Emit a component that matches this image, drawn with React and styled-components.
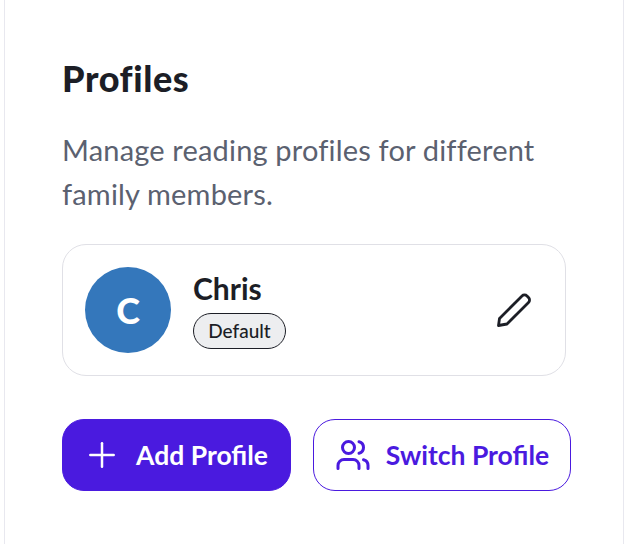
import React from 'react';
import styled, {createGlobalStyle} from 'styled-components';
import {Plus, Users} from 'lucide-react';

const GlobalStyle = createGlobalStyle`
  html, body {
    margin: 0;
    padding: 0;
    background: #fff;
  }
  body {
    font-family: "Lato", "Liberation Sans", sans-serif;
  }
`;

export default function App() {
  return (
    <>
      <GlobalStyle />
      <Page>
        <Panel>
          <Title>Profiles</Title>
          <Description>Manage reading profiles for different family members.</Description>
          <ProfileCard>
            <Avatar>C</Avatar>
            <ProfileInfo>
              <ProfileName>Chris</ProfileName>
              <DefaultBadge>Default</DefaultBadge>
            </ProfileInfo>
            <EditButton>
              <svg width="36" height="36" viewBox="0 0 36 36" fill="none" stroke="currentColor" strokeWidth="2.8" strokeLinejoin="round">
                <path d="M3.5 26.5 L26 4 a3.5 3.5 0 0 1 5 0 l1.5 1.5 a3.5 3.5 0 0 1 0 5 L11 32 L2.5 33.5 Z" />
              </svg>
            </EditButton>
          </ProfileCard>
          <ButtonRow>
            <ActionButton $primary $width={229} $gap={14}>
              <Plus size={40} strokeWidth={1.5} />
              Add Profile
            </ActionButton>
            <ActionButton $width={258} $gap={15}>
              <Users size={36} strokeWidth={2} />
              Switch Profile
            </ActionButton>
          </ButtonRow>
        </Panel>
      </Page>
    </>
  );
}

const Page = styled.div`
  width: 624px;
  height: 544px;
  padding-left: 4px;
  box-sizing: border-box;
  overflow: hidden;
`;

const Panel = styled.div`
  width: 620px;
  height: 544px;
  box-sizing: border-box;
  border-left: 1px solid #e8e8ef;
  border-right: 1px solid #e8e8ef;
  padding: 58px 57px 0;
`;

const Title = styled.h2`
  margin: 0;
  font-size: 36px;
  line-height: 40px;
  font-weight: 900;
  letter-spacing: 0.6px;
  color: #1c1e26;
`;

const Description = styled.p`
  margin: 30px 0 0;
  width: 490px;
  font-size: 29px;
  line-height: 44px;
  font-weight: 400;
  letter-spacing: 0.18px;
  color: #5b6170;
`;

const ProfileCard = styled.div`
  margin-top: 28px;
  width: 504px;
  height: 132px;
  box-sizing: border-box;
  border: 1px solid #e0e0e6;
  border-radius: 24px;
  padding: 0 33px 0 22px;
  display: flex;
  align-items: center;
`;

const Avatar = styled.div`
  width: 86px;
  height: 86px;
  border-radius: 50%;
  background: #3477bb;
  color: #fff;
  font-size: 36px;
  font-weight: 900;
  display: flex;
  align-items: center;
  justify-content: center;
  flex-shrink: 0;
`;

const ProfileInfo = styled.div`
  margin-left: 22px;
  padding-bottom: 1px;
  flex: 1;
  display: flex;
  flex-direction: column;
  align-items: flex-start;
`;

const ProfileName = styled.div`
  font-size: 30px;
  line-height: 34px;
  font-weight: 700;
  color: #1c1e26;
`;

const DefaultBadge = styled.span`
  margin-top: 8px;
  height: 36px;
  width: 93px;
  box-sizing: border-box;
  border: 1px solid #1c1e26;
  border-radius: 18px;
  background: #edeef0;
  color: #1c1e26;
  font-size: 19px;
  font-weight: 500;
  display: flex;
  align-items: center;
  justify-content: center;
`;

const EditButton = styled.div`
  width: 36px;
  height: 36px;
  color: #1c1e26;
  display: flex;
  align-items: center;
  justify-content: center;
`;

const ButtonRow = styled.div`
  margin-top: 43px;
  display: flex;
  gap: 22px;
`;

const ActionButton = styled.button`
  width: ${props => props.$width}px;
  height: 72px;
  flex-shrink: 0;
  box-sizing: border-box;
  border: 1px solid #4a1adf;
  border-radius: 22px;
  background: ${props => (props.$primary ? '#4a1adf' : '#fff')};
  color: ${props => (props.$primary ? '#fff' : '#4a1adf')};
  font-family: inherit;
  font-size: 26.5px;
  font-weight: 700;
  display: flex;
  align-items: center;
  justify-content: center;
  gap: ${props => props.$gap}px;
  padding: 0 ${props => (props.$primary ? 3 : 0)}px 0 0;
`;
